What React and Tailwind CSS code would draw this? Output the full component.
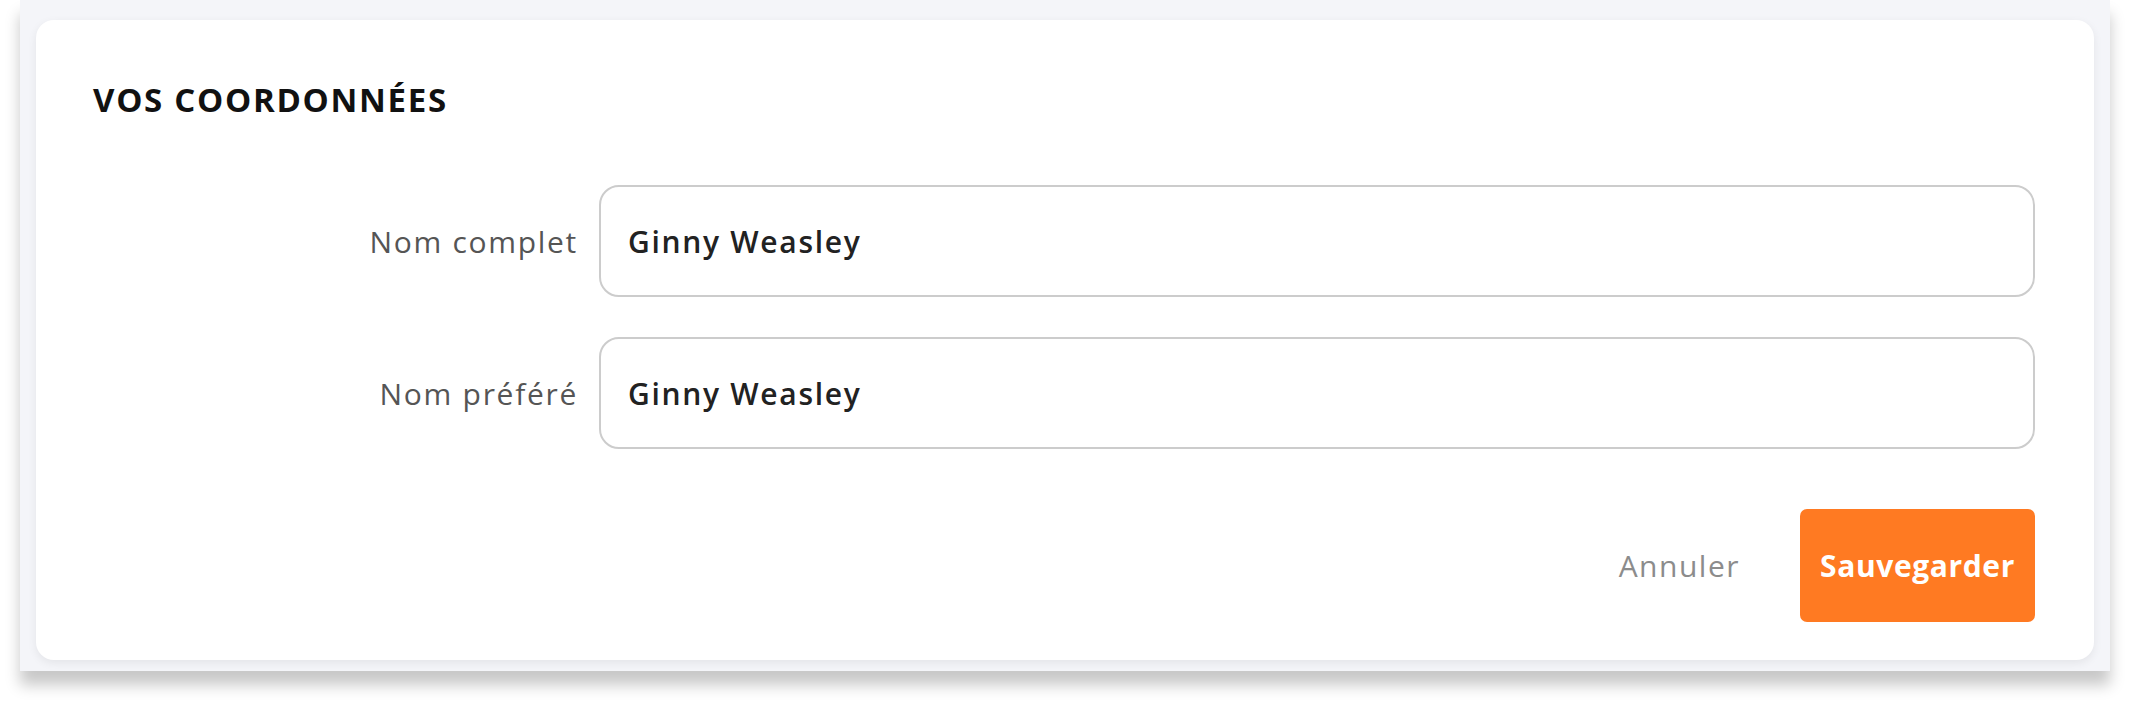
export default function App() {
  return (
    <div className="w-[2130px] h-[712px] bg-white overflow-hidden font-['Open_Sans',_'Noto_Sans',_sans-serif]">
      <div className="ml-[20px] w-[2090px] bg-[#f4f5f9] pt-5 pb-[11px] px-4 shadow-[0_14px_14px_rgba(0,0,0,0.22)]">
        <div className="rounded-[18px] bg-white pl-[57px] pr-[59px] pt-[60px] pb-[38px] shadow-[0_3px_10px_rgba(0,0,0,0.07)]">
          <h2 className="text-[33px] leading-[40px] font-bold tracking-[1.7px] text-[#111111]">
            VOS COORDONNÉES
          </h2>
          <div className="mt-[65px] flex flex-col gap-10">
            <div className="flex items-center gap-[21px]">
              <label className="w-[485px] text-right text-[30px] tracking-[1.7px] text-[#555555]">Nom complet</label>
              <div className="flex-1 h-[112px] rounded-[20px] border-2 border-[#cccccc] flex items-center pl-[27px]">
                <span className="text-[30px] font-semibold tracking-[1.7px] text-[#222222]">Ginny Weasley</span>
              </div>
            </div>
            <div className="flex items-center gap-[21px]">
              <label className="w-[485px] text-right text-[30px] tracking-[1.7px] text-[#555555]">Nom préféré</label>
              <div className="flex-1 h-[112px] rounded-[20px] border-2 border-[#cccccc] flex items-center pl-[27px]">
                <span className="text-[30px] font-semibold tracking-[1.7px] text-[#222222]">Ginny Weasley</span>
              </div>
            </div>
          </div>
          <div className="mt-[60px] flex items-center justify-end">
            <button className="text-[30px] tracking-[1.5px] text-[#8c8c8c] mr-[60px]">Annuler</button>
            <button className="w-[235px] h-[113px] rounded-[7px] bg-[#ff7a22] text-white text-[30px] font-bold tracking-[0.6px]">
              Sauvegarder
            </button>
          </div>
        </div>
      </div>
    </div>
  );
}
